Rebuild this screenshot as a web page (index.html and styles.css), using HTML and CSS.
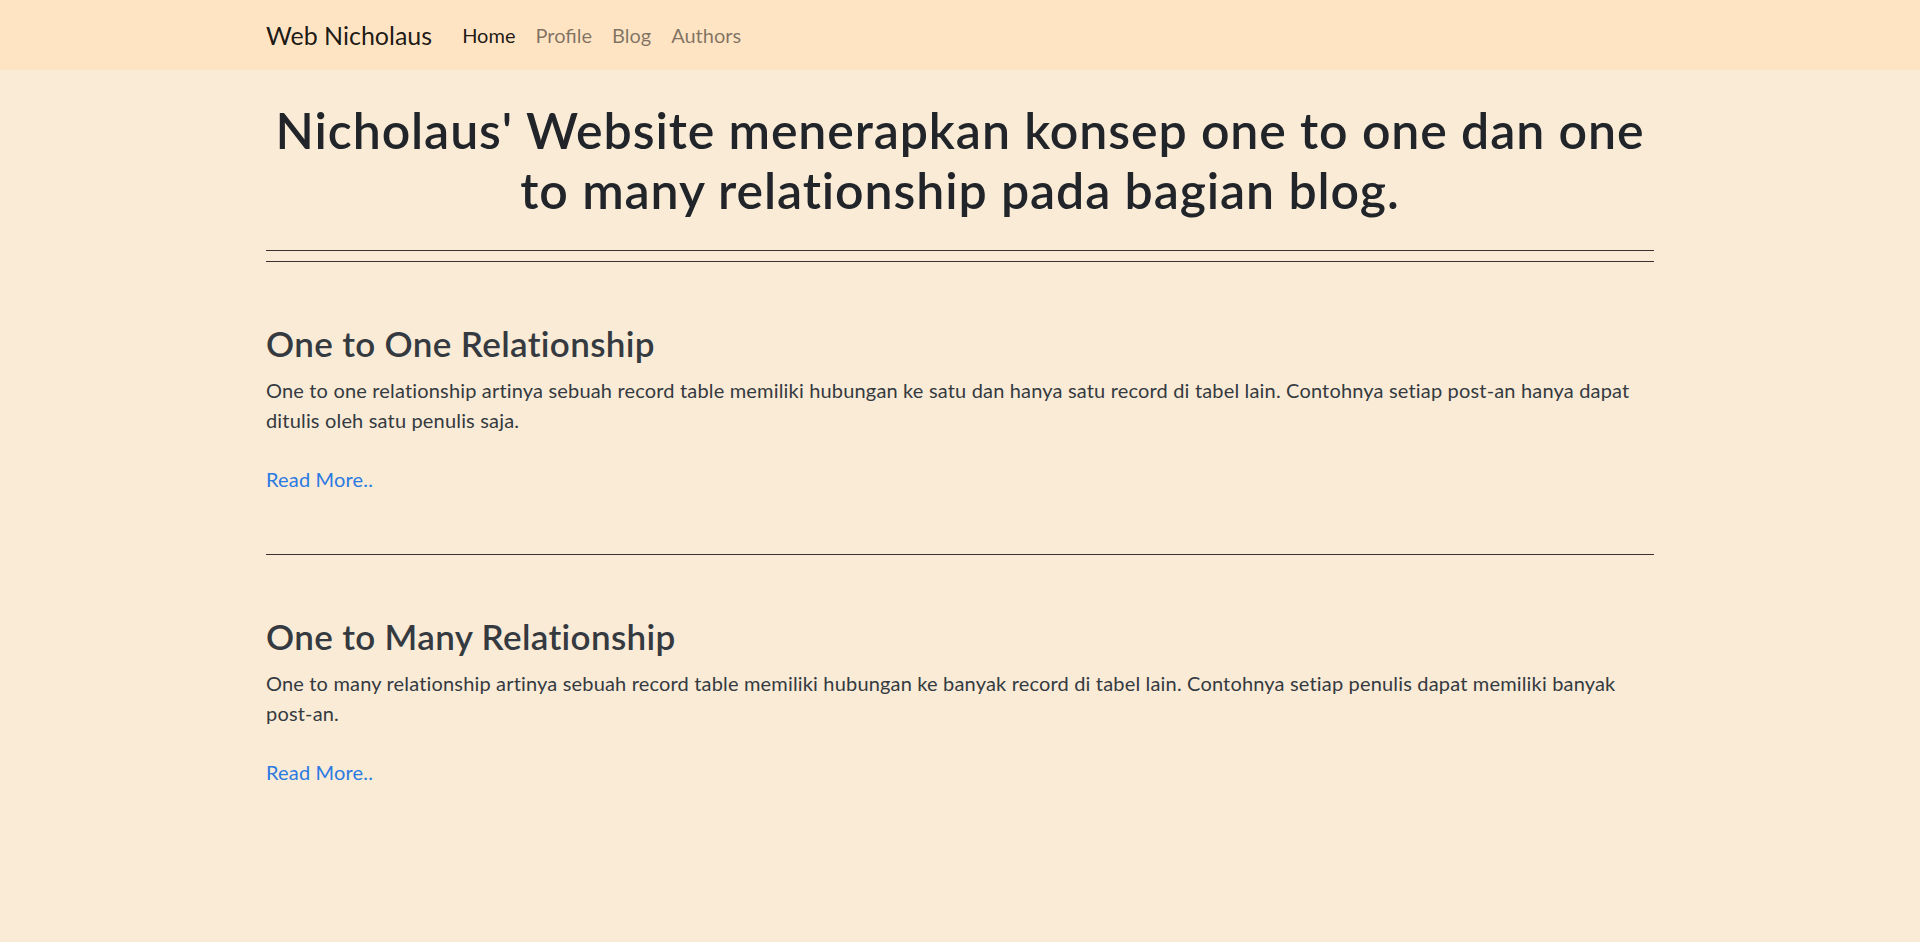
FILE: index.html
```html
<!DOCTYPE html>
<html lang="id">
<head>
<meta charset="utf-8">
<title>Web Nicholaus</title>
<link rel="stylesheet" href="styles.css">
</head>
<body>
<nav class="navbar">
  <div class="container nav-inner">
    <a class="brand" href="#">Web Nicholaus</a>
    <ul class="nav-links">
      <li><a class="nav-link active" href="#">Home</a></li>
      <li><a class="nav-link" href="#">Profile</a></li>
      <li><a class="nav-link" href="#">Blog</a></li>
      <li><a class="nav-link" href="#">Authors</a></li>
    </ul>
  </div>
</nav>
<main class="container main">
  <h1 class="title">Nicholaus' Website menerapkan konsep one to one dan one to many relationship pada bagian blog.</h1>
  <div class="double-rule"><hr class="rule"><hr class="rule"></div>
  <article class="post">
    <h3 class="post-title">One to One Relationship</h3>
    <p class="post-text">One to one relationship artinya sebuah record table memiliki hubungan ke satu dan hanya satu record di tabel lain. Contohnya setiap post-an hanya dapat ditulis oleh satu penulis saja.</p>
    <a class="read-more" href="#">Read More..</a>
  </article>
  <hr class="rule">
  <article class="post">
    <h3 class="post-title">One to Many Relationship</h3>
    <p class="post-text">One to many relationship artinya sebuah record table memiliki hubungan ke banyak record di tabel lain. Contohnya setiap penulis dapat memiliki banyak <span class="nowrap">post-an.</span></p>
    <a class="read-more" href="#">Read More..</a>
  </article>
</main>
</body>
</html>
```
FILE: styles.css
```css
* { box-sizing: border-box; }
html, body { margin: 0; padding: 0; }
body {
  background: #faebd7;
  font-family: Lato, "Open Sans", "Liberation Sans", sans-serif;
  font-size: 20px;
  line-height: 30px;
  color: #343a40;
  min-height: 942px;
}
.container {
  width: 1388px;
  margin: 0 auto;
}
.navbar {
  background: #ffe4c4;
  height: 70px;
}
.nav-inner {
  display: flex;
  align-items: center;
  height: 70px;
}
.brand {
  font-size: 25px;
  line-height: 30px;
  color: rgba(0, 0, 0, 0.9);
  text-decoration: none;
  margin-right: 20px;
}
.nav-links {
  display: flex;
  list-style: none;
  margin: 0;
  padding: 0;
}
.nav-link {
  display: block;
  padding: 10px 10px;
  color: rgba(0, 0, 0, 0.5);
  text-decoration: none;
  font-size: 20px;
}
.nav-link.active { color: rgba(0, 0, 0, 0.9); }
.main { padding-top: 30px; }
.title {
  margin: 0;
  text-align: center;
  font-size: 50px;
  line-height: 60px;
  font-weight: 600;
  letter-spacing: 0.9px;
  color: #212529;
}
.double-rule {
  display: flex;
  flex-direction: column;
  gap: 10px;
  margin-top: 30px;
}
.rule {
  border: 0;
  border-top: 1px solid #3a3330;
  margin: 0;
  height: 0;
}
.post { padding: 60px 0 60px; }
.post-title {
  margin: 0 0 11px;
  font-size: 35px;
  line-height: 42px;
  font-weight: 600;
  letter-spacing: 0.35px;
  color: #343a40;
}
.post-text {
  margin: 0 0 29px;
  letter-spacing: 0.17px;
}
.nowrap { white-space: nowrap; }
.read-more {
  display: block;
  color: #2a7ae2;
  text-decoration: none;
  letter-spacing: 0.17px;
}
```
